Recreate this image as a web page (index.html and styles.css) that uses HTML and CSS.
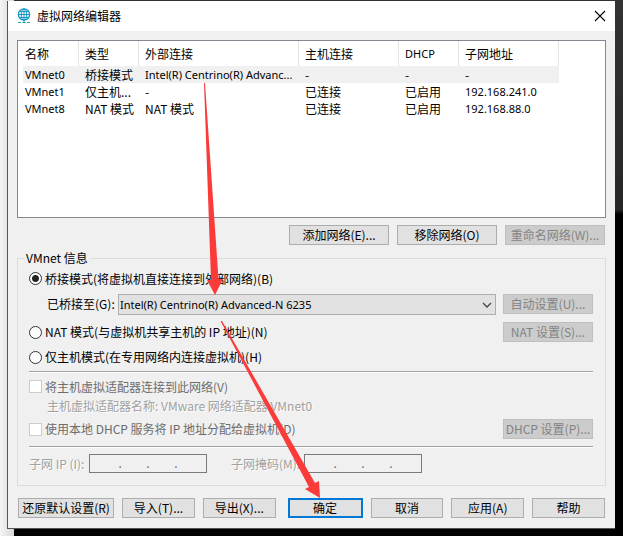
FILE: index.html
```html
<!DOCTYPE html>
<html lang="zh-CN">
<head>
  <meta charset="UTF-8">
  <meta name="viewport" content="width=device-width, initial-scale=1.0">
  <title>虚拟网络编辑器</title>
  <link rel="stylesheet" href="styles.css">
</head>
<body>
  <main class="dialog">
    <header class="title-bar">
      <svg class="title-icon" viewBox="0 0 14 16" width="14" height="16" fill="none" stroke="#1497c4">
        <circle cx="7" cy="6.5" r="5.6" stroke-width="1.3"/>
        <ellipse cx="7" cy="6.5" rx="2.7" ry="5.6"/>
        <path d="M7 1v13M1.5 6.5h11M2.4 3.6h9.2M2.4 9.4h9.2"/>
        <path d="M1 14.5h3M5.5 14.5h3M10 14.5h3" stroke="#23a9a0"/>
      </svg>
      <h1 class="title">虚拟网络编辑器</h1>
      <button class="close-btn" type="button" aria-label="关闭">
        <svg viewBox="0 0 12 12" width="12" height="12" stroke="#000" stroke-width="1.1">
          <path d="M1 1l10 10M11 1L1 11"/>
        </svg>
      </button>
    </header>

    <form class="content">
      <div class="list-box">
        <table class="net-table">
          <colgroup>
            <col class="col-first"><col class="col-s"><col class="col-l">
            <col class="col-m"><col class="col-s"><col class="col-m">
          </colgroup>
          <thead>
            <tr>
              <th>名称</th>
              <th>类型</th>
              <th>外部连接</th>
              <th>主机连接</th>
              <th class="latin">DHCP</th>
              <th>子网地址</th>
            </tr>
          </thead>
          <tbody>
            <tr class="selected">
              <td class="latin">VMnet0</td>
              <td>桥接模式</td>
              <td class="latin">Intel(R) Centrino(R) Advanc...</td>
              <td>-</td>
              <td>-</td>
              <td>-</td>
            </tr>
            <tr>
              <td class="latin">VMnet1</td>
              <td>仅主机...</td>
              <td>-</td>
              <td>已连接</td>
              <td>已启用</td>
              <td class="latin">192.168.241.0</td>
            </tr>
            <tr>
              <td class="latin">VMnet8</td>
              <td>NAT 模式</td>
              <td>NAT 模式</td>
              <td>已连接</td>
              <td>已启用</td>
              <td class="latin">192.168.88.0</td>
            </tr>
          </tbody>
        </table>
      </div>

      <div class="list-actions">
        <button class="btn" type="button">添加网络(E)...</button>
        <button class="btn" type="button">移除网络(O)</button>
        <button class="btn" type="button" disabled>重命名网络(W)...</button>
      </div>

      <fieldset class="info">
        <legend>VMnet 信息</legend>

        <div class="row">
          <label class="option"><input type="radio" name="mode" checked>桥接模式(将虚拟机直接连接到外部网络)(B)</label>
        </div>
        <div class="row bridge-row">
          <label class="bridge-label" for="adapter">已桥接至(G):</label>
          <span class="select-wrap">
            <select class="latin" id="adapter">
              <option>Intel(R) Centrino(R) Advanced-N 6235</option>
            </select>
            <svg class="chevron" viewBox="0 0 10 6" width="10" height="6" fill="none" stroke="#444" stroke-width="1.3">
              <path d="M1 1l4 4 4-4"/>
            </svg>
          </span>
          <button class="btn" type="button" disabled>自动设置(U)...</button>
        </div>
        <div class="row nat-row">
          <label class="option"><input type="radio" name="mode">NAT 模式(与虚拟机共享主机的 IP 地址)(N)</label>
          <button class="btn" type="button" disabled>NAT 设置(S)...</button>
        </div>
        <div class="row host-only-row">
          <label class="option"><input type="radio" name="mode">仅主机模式(在专用网络内连接虚拟机)(H)</label>
        </div>

        <hr>

        <div class="row adapter-row">
          <label class="option off"><input type="checkbox" disabled>将主机虚拟适配器连接到此网络(V)</label>
        </div>
        <p class="note">主机虚拟适配器名称: VMware 网络适配器 VMnet0</p>
        <div class="row dhcp-row">
          <label class="option off"><input type="checkbox" disabled>使用本地 DHCP 服务将 IP 地址分配给虚拟机(D)</label>
          <button class="btn" type="button" disabled>DHCP 设置(P)...</button>
        </div>

        <hr>

        <div class="row ip-row">
          <label class="ip-label" for="ip1">子网 IP (I):</label>
          <span class="ip-box">
            <input id="ip1" type="text" disabled>.<input type="text" aria-label="子网 IP 2" disabled>.<input type="text" aria-label="子网 IP 3" disabled>.<input type="text" aria-label="子网 IP 4" disabled>
          </span>
          <label class="mask-label" for="mask1">子网掩码(M):</label>
          <span class="ip-box">
            <input id="mask1" type="text" disabled>.<input type="text" aria-label="子网掩码 2" disabled>.<input type="text" aria-label="子网掩码 3" disabled>.<input type="text" aria-label="子网掩码 4" disabled>
          </span>
        </div>
      </fieldset>

      <footer class="footer">
        <button class="btn restore" type="button">还原默认设置(R)</button>
        <button class="btn" type="button">导入(T)...</button>
        <button class="btn" type="button">导出(X)...</button>
        <button class="btn primary" type="submit">确定</button>
        <button class="btn" type="button">取消</button>
        <button class="btn" type="button">应用(A)</button>
        <button class="btn" type="button">帮助</button>
      </footer>
    </form>

    <!-- arrows: selected network -> adapter -> OK -->
    <svg class="arrows" viewBox="0 0 340 510" width="340" height="510" fill="#fb3a3a">
      <path d="M196 82L197 82L210.500 278L215 278L207 294L199 279L203 279Z"/>
      <path d="M212.500 320L214 320L307 482L311 480L312 497L297 488L301 486Z"/>
    </svg>
  </main>
</body>
</html>
```
FILE: styles.css
```css
* {
  box-sizing: border-box;
}

body {
  margin: 0;
  padding: 1px 8px 7px 7px;
  min-height: 100vh;
  font-family: "Noto Sans CJK SC", sans-serif;
  font-size: 12px;
  line-height: 16px;
  color: #000;
  background:
    linear-gradient(90deg, #f4f4f4, #d8d8d8) left / 14px 100% no-repeat,
    linear-gradient(#333 0, #262626 210px, #000 214px);
}

.dialog {
  position: relative;
  background: #f0f0f0;
  border: solid #555;
  border-width: 0 0 1px 1px;
}

.title-bar {
  display: flex;
  align-items: center;
  height: 30px;
  padding: 0 8px 0 9px;
  background: #fff;
}

.title-icon {
  margin-right: 6px;
}

.title {
  flex: 1;
  margin: 0;
  font-size: 12px;
  font-weight: normal;
}

.close-btn {
  display: flex;
  padding: 1px;
  border: none;
  background: none;
}

.content {
  padding: 9px 9px 10px;
}

/* network list */
.list-box {
  height: 178px;
  padding-left: 5px;
  border: 1px solid #828790;
  background: #fff;
}

.net-table {
  table-layout: fixed;
  width: 536px;
  border-spacing: 0;
}

.col-first { width: 56px; }
.col-s { width: 60px; }
.col-m { width: 100px; }
.col-l { width: 160px; }

.net-table th,
.net-table td {
  height: 17px;
  padding: 0 0 0 6px;
  font-weight: normal;
  text-align: left;
  white-space: nowrap;
  line-height: 16px;
}

.net-table th {
  height: 25px;
  border-right: 1px solid #e5e5e5;
}

.net-table th:first-child,
.net-table td:first-child {
  padding-left: 2px;
}

.net-table .selected {
  background: #f0f0f0;
}

.net-table .latin,
.latin {
  font-family: "Noto Sans", "Noto Sans CJK SC", sans-serif;
  font-size: 11px;
}

/* buttons */
.btn {
  height: 20px;
  padding: 0;
  border: 1px solid #adadad;
  background: #e1e1e1;
  font: inherit;
  line-height: 16px;
  color: #000;
  white-space: nowrap;
}

.btn:disabled {
  border-color: #bfbfbf;
  background: #ccc;
  color: #838383;
}

.btn.primary {
  border: 2px solid #0078d7;
}

.list-actions {
  display: flex;
  justify-content: flex-end;
  gap: 8px;
  margin: 7px 1px 5px 0;
}

.list-actions .btn {
  width: 100px;
}

/* VMnet details */
.info {
  min-width: 0;
  margin: 0;
  padding: 0 12px 8px 11px;
  border: 1px solid #dcdcdc;
}

.info legend {
  margin-left: -5px;
  padding: 0 2px;
}

.row {
  display: flex;
  align-items: center;
  height: 25px;
}

.row .btn {
  flex: none;
  width: 90px;
  margin-left: auto;
}

.option {
  display: flex;
  align-items: center;
  gap: 3px;
  white-space: nowrap;
}

.option input {
  appearance: none;
  flex: none;
  width: 13px;
  height: 13px;
  margin: 0;
  border: 1px solid #333;
  background: #fff;
}

.option input[type="radio"] {
  border-radius: 50%;
}

.option input:checked {
  background: radial-gradient(circle, #222 3px, #fff 4px);
}

.option.off {
  color: #6d6d6d;
}

.option.off input {
  border-color: #ccc;
}

.bridge-row,
.dhcp-row {
  height: 26px;
}

.bridge-label {
  width: 71px;
  margin-left: 18px;
}

.select-wrap {
  position: relative;
  flex: 1;
  margin-right: 7px;
}

.select-wrap select {
  appearance: none;
  display: block;
  width: 100%;
  height: 21px;
  padding: 0 20px 0 1px;
  border: 1px solid #adadad;
  border-radius: 0;
  background: #e1e1e1;
  color: #000;
}

.chevron {
  position: absolute;
  top: 8px;
  right: 4px;
}

.nat-row {
  height: 30px;
}

.host-only-row {
  height: 20px;
}

.adapter-row {
  height: 23px;
}

.info hr {
  height: 2px;
  margin: 4px 0 2px;
  border: solid #a0a0a0;
  border-width: 1px 0 0;
  background: #fff;
}

.note {
  margin: 0 0 2px 18px;
  color: #a0a0a0;
  text-shadow: 1px 1px #fff;
}

.ip-row {
  height: 27px;
  color: #a0a0a0;
}

.ip-label {
  width: 60px;
  text-shadow: 1px 1px #fff;
}

.mask-label {
  width: 73px;
  margin-left: 24px;
  text-shadow: 1px 1px #fff;
}

.ip-box {
  display: flex;
  width: 118px;
  height: 19px;
  padding: 0 4px;
  border: 1px solid #7a7a7a;
  color: #6d6d6d;
}

.ip-box input {
  width: 25px;
  min-width: 0;
  padding: 0;
  border: none;
  background: none;
}

/* bottom buttons */
.footer {
  display: flex;
  gap: 8px;
  margin: 12px 1px 0;
}

.footer .btn {
  flex: 73 1 0;
}

.footer .restore {
  flex-grow: 97;
}

.footer .primary {
  margin-left: 4px;
}

.arrows {
  position: absolute;
  top: 0;
  left: 0;
  pointer-events: none;
}
```
